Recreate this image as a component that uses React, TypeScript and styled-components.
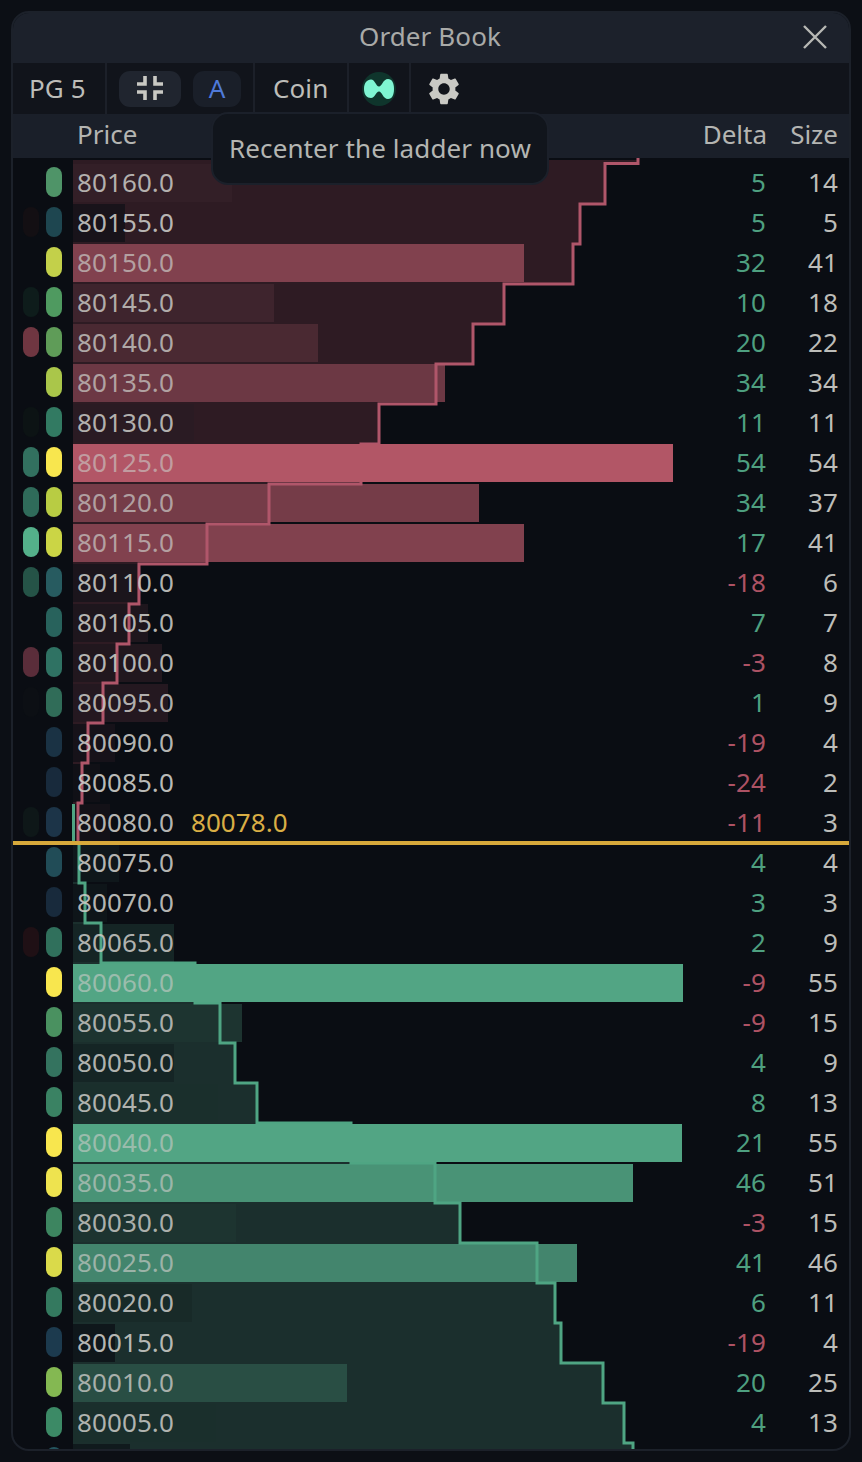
import React from 'react';
import styled, { createGlobalStyle } from 'styled-components';
import { MdSettings } from 'react-icons/md';

const GlobalStyle = createGlobalStyle`
  html, body {
    margin: 0;
    padding: 0;
    background: #0c0f15;
  }
  body {
    font-family: "Noto Sans", "Open Sans", sans-serif;
    font-size: 26px;
    letter-spacing: 0.1px;
  }
`;

const Page = styled.div`
  width: 862px;
  height: 1462px;
  padding: 11px;
  box-sizing: border-box;
  overflow: hidden;
`;

const Panel = styled.div`
  position: relative;
  display: flex;
  flex-direction: column;
  width: 840px;
  height: 1440px;
  box-sizing: border-box;
  border: 2px solid #1c212a;
  border-radius: 18px;
  background: #0a0d13;
  color: #bdbdb9;
`;

const TitleBar = styled.header`
  position: relative;
  flex-shrink: 0;
  height: 50px;
  box-sizing: border-box;
  padding: 0 2px 4px 0;
  display: flex;
  align-items: center;
  justify-content: center;
  background: #1c212b;
  border-radius: 16px 16px 0 0;
  color: #a9aaa8;
`;

const CloseButton = styled.button`
  position: absolute;
  right: 20px;
  top: 10px;
  display: flex;
  width: 28px;
  height: 28px;
  padding: 0;
  border: none;
  background: transparent;
`;

const Toolbar = styled.div`
  flex-shrink: 0;
  height: 51px;
  display: flex;
  background: #11141b;
`;

const ToolSection = styled.div<{ $width: number; $pad: number }>`
  width: ${p => p.$width}px;
  box-sizing: border-box;
  padding-left: ${p => p.$pad}px;
  display: flex;
  align-items: center;
  gap: 12px;
  border-right: 2px solid #1c2029;
`;

const LastSection = styled(ToolSection)`
  border-right: none;
`;

const ToolLabel = styled.span`
  margin-top: -2px;
`;

const ToolButton = styled.button<{ $wide?: boolean }>`
  width: ${p => (p.$wide ? 62 : 48)}px;
  height: 36px;
  padding: 0 0 2px;
  display: flex;
  align-items: center;
  justify-content: center;
  border: none;
  border-radius: 11px;
  background: ${p => (p.$wide ? '#20252f' : '#1a1f29')};
  color: #4f7ad9;
  font: inherit;
`;

const LogoMark = styled.svg`
  display: block;
  width: 34px;
  height: 36px;
`;

const GearIcon = styled(MdSettings)`
  display: block;
  color: #c9c9c4;
`;

const HeaderRow = styled.div`
  flex-shrink: 0;
  height: 44px;
  box-sizing: border-box;
  display: grid;
  grid-template-columns: 64px 1fr 100px 71px;
  align-items: center;
  padding: 0 11px 4px 0;
  background: #1a1f29;
  color: #b4b5b2;
  letter-spacing: 0;
`;

const RightCell = styled.div`
  text-align: right;
`;

const Tooltip = styled.div`
  position: absolute;
  left: 198px;
  top: 99px;
  z-index: 5;
  width: 338px;
  height: 73px;
  box-sizing: border-box;
  padding-bottom: 2px;
  display: flex;
  align-items: center;
  justify-content: center;
  border: 2px solid #1b202a;
  border-radius: 17px;
  background: #11151c;
  color: #b4b5b2;
  white-space: nowrap;
`;

const Ladder = styled.div`
  position: relative;
  isolation: isolate;
  flex: 1;
  min-height: 0;
  padding-top: 5px;
  overflow: hidden;
  border-radius: 0 0 16px 16px;
`;

const DepthLayer = styled.svg<{ $layer: number }>`
  position: absolute;
  left: 0;
  top: 0;
  z-index: ${p => p.$layer};
  width: 836px;
  height: 1291px;
  pointer-events: none;
`;

const Row = styled.div`
  height: 40px;
  display: grid;
  grid-template-columns: 60px 1fr 100px 71px;
  padding-right: 11px;
  line-height: 38px;
`;

const HeatStrip = styled.div`
  display: flex;
  gap: 7px;
  padding: 4px 0 0 10px;
`;

const Pill = styled.span<{ $color?: string }>`
  width: 16px;
  height: 30px;
  border-radius: 8px;
  background: ${p => p.$color || 'transparent'};
`;

const PriceCell = styled.div`
  position: relative;
  display: flex;
  padding-left: 4px;
`;

const VolumeBar = styled.div<{ $color: string; $solid: boolean }>`
  position: absolute;
  left: 0;
  top: 1px;
  bottom: 1px;
  z-index: ${p => (p.$solid ? 2 : 0)};
  background: ${p => p.$color};
`;

const PriceText = styled.span<{ $alpha: number }>`
  position: relative;
  z-index: 3;
  color: rgba(204, 204, 200, ${p => p.$alpha});
`;

const LastPrice = styled.span`
  position: relative;
  z-index: 3;
  margin-left: 17px;
  color: #d9ae45;
`;

const DeltaCell = styled(RightCell)<{ $negative: boolean }>`
  position: relative;
  z-index: 3;
  padding-right: 1px;
  color: ${p => (p.$negative ? '#ad5264' : '#4ea080')};
`;

const SizeCell = styled(RightCell)`
  position: relative;
  z-index: 3;
`;

const PriceLine = styled.div`
  position: absolute;
  left: 0;
  right: 0;
  top: 683px;
  z-index: 4;
  height: 4px;
  background: #d7a93b;
`;

type RowData = [string, number, number, number, string?, string?];
type Side = 'ask' | 'bid';

// price, delta, size, bar right edge, outer pill, inner pill
const asks: RowData[] = [
  ['80160.0', 5, 14, 232, '', '#4f9468'],
  ['80155.0', 5, 5, 125, '#130f13', '#1e4650'],
  ['80150.0', 32, 41, 524, '', '#c3d04a'],
  ['80145.0', 10, 18, 274, '#0e1c1b', '#4f9a60'],
  ['80140.0', 20, 22, 318, '#6f3641', '#5f9c58'],
  ['80135.0', 34, 34, 445, '', '#aac64a'],
  ['80130.0', 11, 11, 194, '#0c1314', '#327a62'],
  ['80125.0', 54, 54, 673, '#32705f', '#f8e64e'],
  ['80120.0', 34, 37, 479, '#2f6b5a', '#b8cc43'],
  ['80115.0', 17, 41, 524, '#54b08a', '#cbd545'],
  ['80110.0', -18, 6, 137, '#255347', '#275b60'],
  ['80105.0', 7, 7, 148, '', '#28625c'],
  ['80100.0', -3, 8, 162, '#5a2d3a', '#2f7263'],
  ['80095.0', 1, 9, 168, '#0c0f14', '#306c58'],
  ['80090.0', -19, 4, 115, '', '#1a3244'],
  ['80085.0', -24, 2, 100, '', '#182a3c'],
  ['80080.0', -11, 3, 110, '#0e1718', '#1c3448'],
];

const bids: RowData[] = [
  ['80075.0', 4, 4, 119, '', '#214c57'],
  ['80070.0', 3, 3, 107, '', '#182a3c'],
  ['80065.0', 2, 9, 174, '#1f1015', '#30705c'],
  ['80060.0', -9, 55, 683, '', '#f8e64e'],
  ['80055.0', -9, 15, 242, '', '#4a9160'],
  ['80050.0', 4, 9, 174, '', '#34735f'],
  ['80045.0', 8, 13, 218, '', '#3a8263'],
  ['80040.0', 21, 55, 682, '', '#f8e64e'],
  ['80035.0', 46, 51, 633, '', '#eee34f'],
  ['80030.0', -3, 15, 236, '', '#3d8560'],
  ['80025.0', 41, 46, 577, '', '#dada4a'],
  ['80020.0', 6, 11, 192, '', '#34795f'],
  ['80015.0', -19, 4, 115, '', '#1c3a4e'],
  ['80010.0', 20, 25, 347, '', '#84b852'],
  ['80005.0', 4, 13, 216, '', '#3c8a66'],
];

const askCurve = [
  [638, 158], [638, 163.5], [605, 163.5], [605, 204], [580, 204], [580, 244], [573, 244], [573, 284],
  [504, 284], [504, 324], [473, 324], [473, 364], [436, 364], [436, 404], [379, 404], [379, 444],
  [361, 444], [361, 484], [269, 484], [269, 524], [207, 524], [207, 564], [139, 564], [139, 604],
  [129, 604], [129, 644], [117, 644], [117, 683], [103, 683], [103, 723], [88, 723], [88, 763],
  [82, 763], [82, 803], [78, 803], [78, 843],
];

const bidCurve = [
  [79, 843], [79, 883], [85, 883], [85, 923], [101, 923], [101, 963], [195, 963], [195, 1003],
  [220, 1003], [220, 1043], [235, 1043], [235, 1083], [257, 1083], [257, 1123], [351, 1123],
  [351, 1163], [435, 1163], [435, 1203], [460, 1203], [460, 1243], [537, 1243], [537, 1283],
  [555, 1283], [555, 1323], [561, 1323], [561, 1363], [603, 1363], [603, 1403], [624, 1403],
  [624, 1443], [633, 1443], [633, 1450],
];

const toPoints = (pts: number[][]) => pts.map(p => p.join(',')).join(' ');

function heatColor(side: Side, size: number) {
  const t = size >= 54 ? 1 : (size / 54) * 0.93;
  const from = [10, 13, 19];
  const to = side === 'ask' ? [178, 86, 102] : [82, 165, 132];
  const mixed = from.map((c, i) => Math.round(c + (to[i] - c) * t));
  return `rgb(${mixed.join(',')})`;
}

function LadderRow({ row, side, last }: { row: RowData; side: Side; last?: string }) {
  const [price, delta, size, right, outer, inner] = row;
  return (
    <Row>
      <HeatStrip>
        <Pill $color={outer} />
        <Pill $color={inner} />
      </HeatStrip>
      <PriceCell>
        <VolumeBar $color={heatColor(side, size)} $solid={size >= 54} style={{ width: right - 73 }} />
        <PriceText $alpha={0.92 - 0.3 * Math.min(1, size / 54)}>{price}</PriceText>
        {last && <LastPrice>{last}</LastPrice>}
      </PriceCell>
      <DeltaCell $negative={delta < 0}>{delta}</DeltaCell>
      <SizeCell>{size}</SizeCell>
    </Row>
  );
}

// the next level down only peeks in at the bottom edge, so it has no readable text
function PeekingRow() {
  return (
    <Row>
      <HeatStrip>
        <Pill />
        <Pill $color="#24555f" />
      </HeatStrip>
      <PriceCell>
        <VolumeBar $color={heatColor('bid', 5)} $solid={false} style={{ width: 57 }} />
      </PriceCell>
    </Row>
  );
}

export default function App() {
  return (
    <Page>
      <GlobalStyle />
      <Panel>
        <TitleBar>
          Order Book
          <CloseButton type="button" aria-label="Close">
            <svg width="28" height="28" viewBox="0 0 28 28">
              <path d="M3 3 L25 25 M25 3 L3 25" stroke="#b7b8b4" strokeWidth="2.4" fill="none" />
            </svg>
          </CloseButton>
        </TitleBar>
        <Toolbar>
          <ToolSection $width={94} $pad={16}>
            <ToolLabel>PG 5</ToolLabel>
          </ToolSection>
          <ToolSection $width={148} $pad={12}>
            <ToolButton type="button" $wide aria-label="Compact">
              <svg width="26" height="26" viewBox="0 0 26 26">
                <path
                  d="M8 1 V9 H0 M18 1 V9 H26 M8 25 V17 H0 M18 25 V17 H26"
                  stroke="#c9c9c4"
                  strokeWidth="3.6"
                  fill="none"
                />
              </svg>
            </ToolButton>
            <ToolButton type="button">A</ToolButton>
          </ToolSection>
          <ToolSection $width={94} $pad={18}>
            <ToolLabel>Coin</ToolLabel>
          </ToolSection>
          <ToolSection $width={62} $pad={13}>
            <LogoMark viewBox="0 0 34 36">
              <circle cx="17" cy="18" r="17" fill="#0f352c" />
              <path
                d="M2 18 C2 12 5 8.5 9 8.5 C13 8.5 14 15.5 17 15.5 C20 15.5 21 8 26 8 C30 8 32 12 32 18 C32 24 30 28 26 28 C21 28 20 20.5 17 20.5 C14 20.5 13 27 9 27 C5 27 2 24 2 18 Z"
                fill="#7ff5d2"
              />
            </LogoMark>
          </ToolSection>
          <LastSection $width={100} $pad={14}>
            <GearIcon size={38} />
          </LastSection>
        </Toolbar>
        <HeaderRow>
          <div />
          <div>Price</div>
          <RightCell>Delta</RightCell>
          <RightCell>Size</RightCell>
        </HeaderRow>
        <Tooltip>Recenter the ladder now</Tooltip>
        <Ladder>
          <DepthLayer $layer={-1} viewBox="13 158 836 1291">
            <polygon points={`73,160 638,160 ${toPoints(askCurve.slice(1))} 73,843`} fill="#2e1b23" />
            <polygon points={`73,843 ${toPoints(bidCurve)} 73,1450`} fill="#1b2f2d" />
          </DepthLayer>
          <DepthLayer $layer={1} viewBox="13 158 836 1291">
            <polyline points={toPoints(askCurve)} fill="none" stroke="#b0566a" strokeWidth="3" />
            <polyline points={toPoints(bidCurve)} fill="none" stroke="#4fa583" strokeWidth="3" />
            <line x1="73.5" y1="804" x2="73.5" y2="843" stroke="#4fa583" strokeWidth="3" />
          </DepthLayer>
          {asks.map((row, i) => (
            <LadderRow key={row[0]} row={row} side="ask" last={i === asks.length - 1 ? '80078.0' : undefined} />
          ))}
          {bids.map(row => (
            <LadderRow key={row[0]} row={row} side="bid" />
          ))}
          <PeekingRow />
          <PriceLine />
        </Ladder>
      </Panel>
    </Page>
  );
}
